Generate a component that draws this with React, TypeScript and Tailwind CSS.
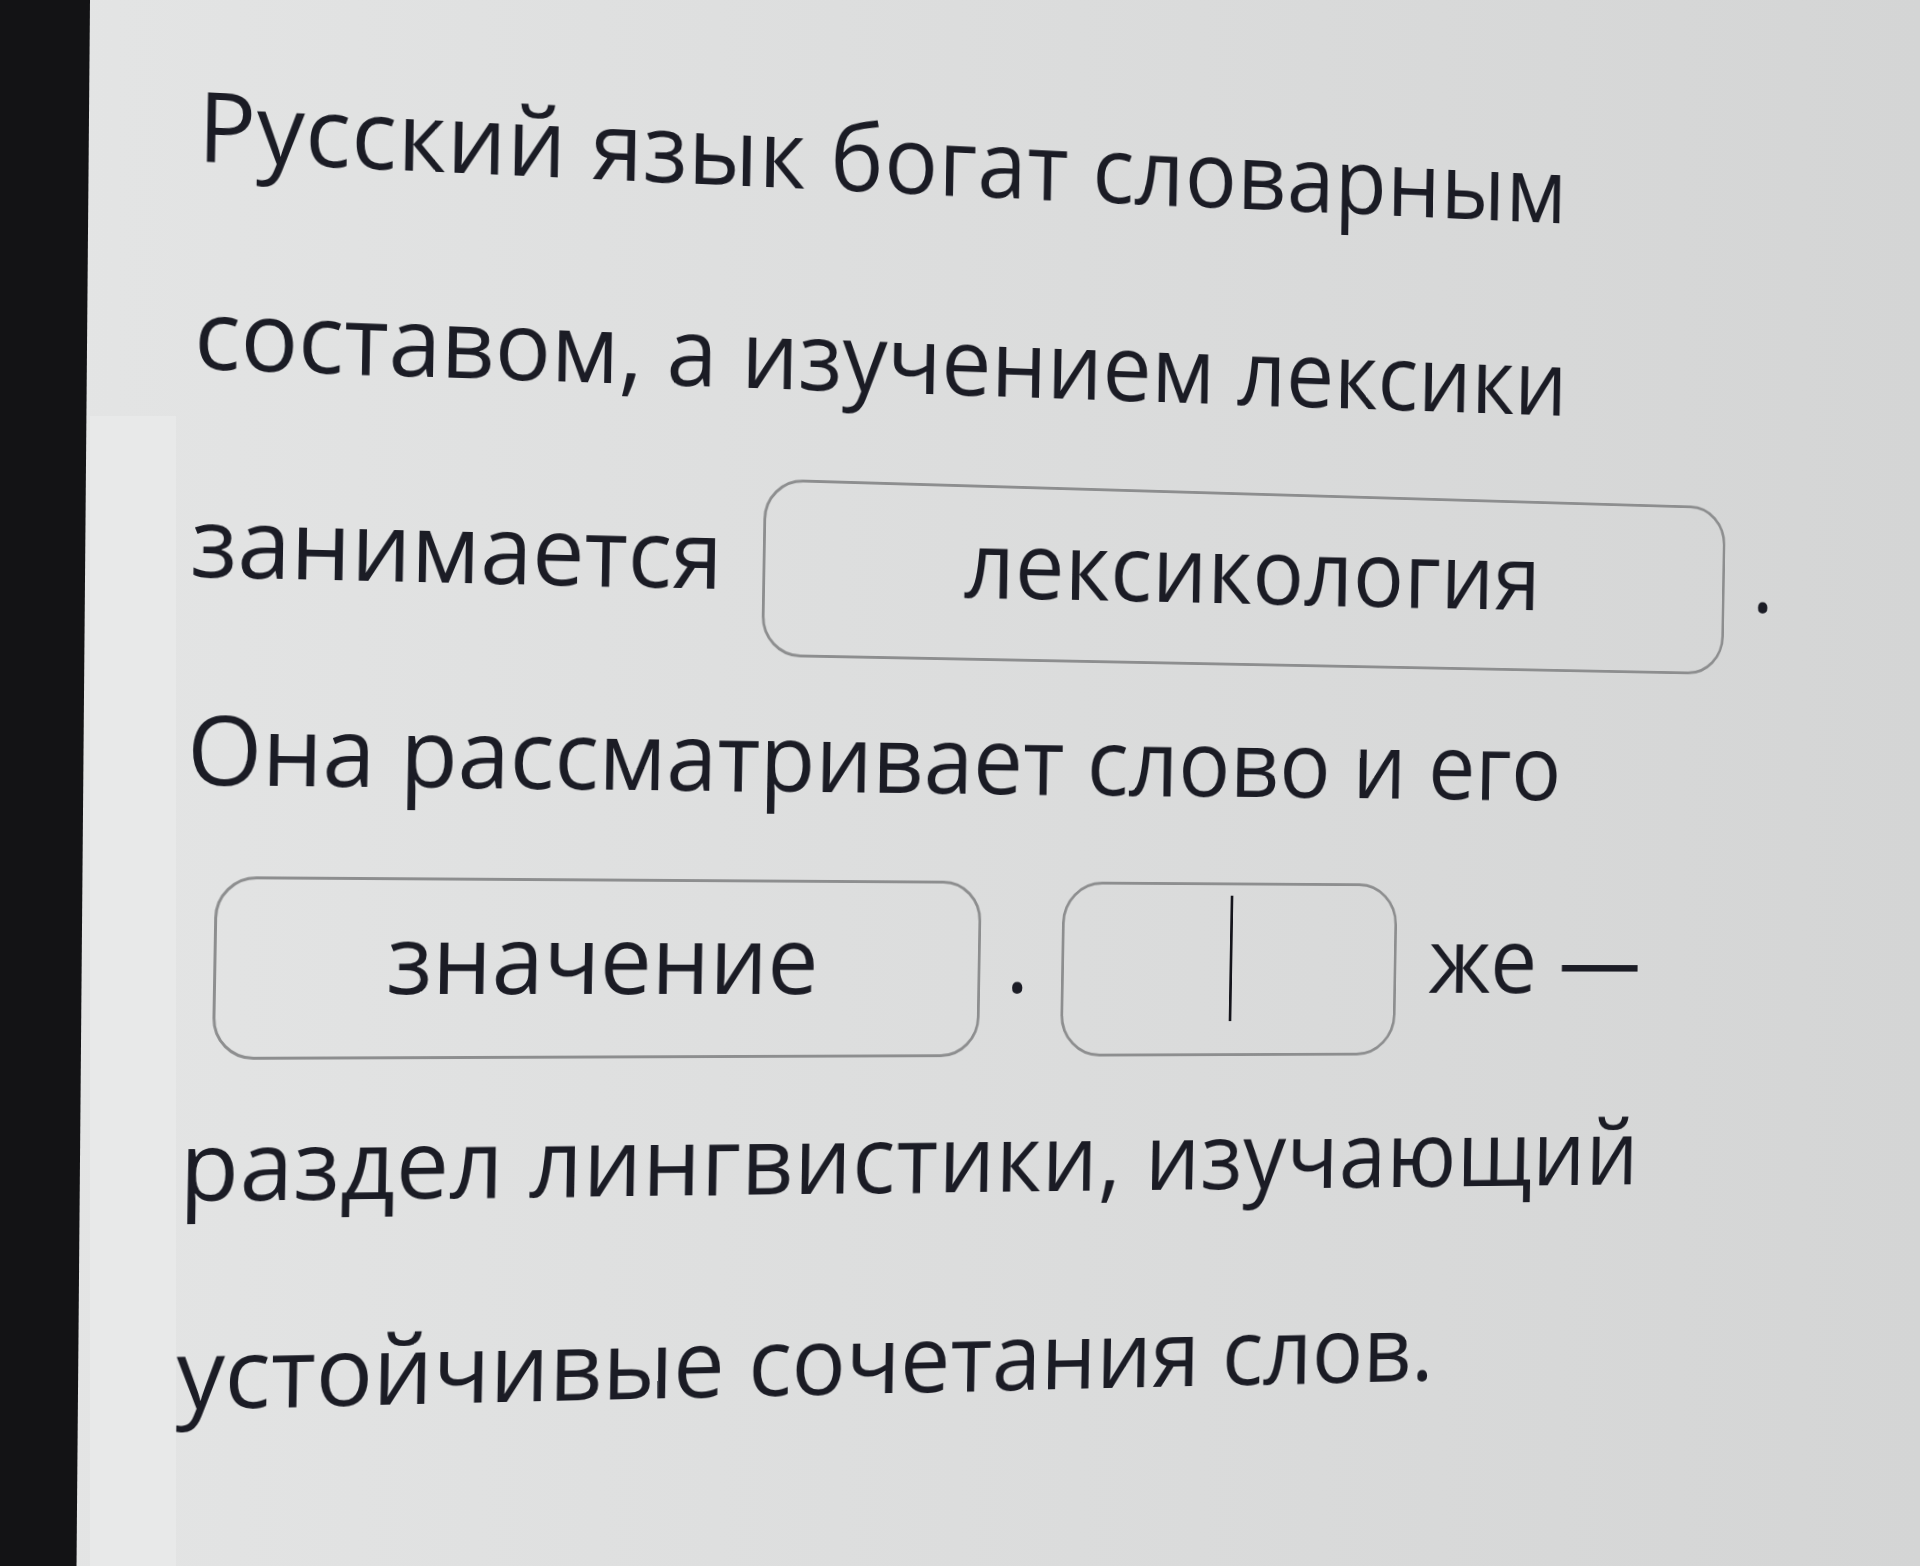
import React from "react";

const Line = ({ children, className = "" }: { children: React.ReactNode; className?: string }) => (
  <div className={`h-[208px] flex items-center ${className}`}>{children}</div>
);

export default function App() {
  return (
    <div
      className="w-[1920px] h-[1566px] overflow-hidden flex bg-gradient-to-r from-[#e4e5e5] via-[#dcdddd] to-[#d4d5d5] text-[#1b1c25]"
      style={{ fontFamily: '"Open Sans", "Noto Sans", sans-serif' }}
    >
      <div className="w-[90px] shrink-0 bg-[#131315] [clip-path:polygon(0_0,100%_0,85%_100%,0_100%)]" />
      <div className="w-[86px] shrink-0 flex flex-col">
        <div className="h-[416px] shrink-0" />
        <div className="flex-1 bg-[#e8e9e9]" />
      </div>
      <div className="flex-1 min-w-0 pl-[14px] pt-[19px] text-[97px] leading-[208px] whitespace-nowrap origin-[24px_990px] [transform:perspective(1500px)_rotateY(4.74deg)_translateX(-7px)_skewX(-1deg)]">
        <Line className="tracking-[0.65px]">Русский язык богат словарным</Line>
        <Line>составом, а изучением лексики</Line>
        <Line>
          <span className="shrink-0">занимается</span>
          <span className="ml-[43px] mt-[30px] w-[1088px] h-[184px] shrink-0 rounded-[42px] border-[3px] border-[#8d8e8f] flex items-center justify-center pb-[24px] leading-none tracking-[0.4px]">
            лексикология
          </span>
          <span className="ml-[33px] shrink-0">.</span>
        </Line>
        <Line>Она рассматривает слово и его</Line>
        <Line>
          <span className="ml-[30px] mt-[26px] w-[805px] h-[184px] shrink-0 rounded-[42px] border-[3px] border-[#8d8e8f] flex items-center justify-center pb-[24px] leading-none">
            значение
          </span>
          <span className="ml-[28px] shrink-0">.</span>
          <span className="ml-[36px] mt-[26px] w-[378px] h-[184px] shrink-0 rounded-[44px] border-[3px] border-[#8d8e8f] flex items-center justify-center pb-[24px]">
            <span className="block w-[3px] h-[133px] bg-[#15151c]" />
          </span>
          <span className="ml-[37px] shrink-0">же —</span>
        </Line>
        <Line className="tracking-[0.8px]">раздел лингвистики, изучающий</Line>
        <Line>устойчивые сочетания слов.</Line>
      </div>
    </div>
  );
}
